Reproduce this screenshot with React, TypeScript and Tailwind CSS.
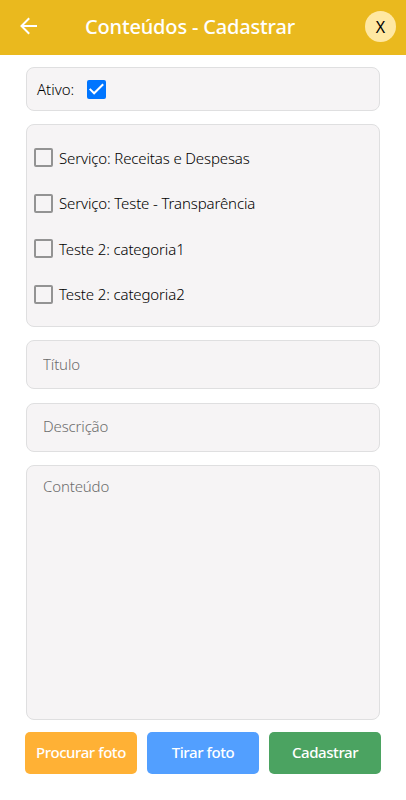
import React, { useState } from 'react';

interface Category {
    id: number;
    label: string;
}

const CATEGORIES: Category[] = [
    { id: 1, label: 'Serviço: Receitas e Despesas' },
    { id: 2, label: 'Serviço: Teste - Transparência' },
    { id: 3, label: 'Teste 2: categoria1' },
    { id: 4, label: 'Teste 2: categoria2' },
];

const fieldClass =
    'block w-full resize-none rounded-lg border border-[#dfdfe0] bg-[#f6f4f5] px-4 text-[15px] tracking-[-0.15px] font-light text-black placeholder:text-[#6c6c6c] placeholder:opacity-100 focus:outline-none';

interface CheckboxProps {
    checked: boolean;
    onChange: () => void;
    label: string;
}

const Checkbox: React.FC<CheckboxProps> = ({ checked, onChange, label }) => (
    <button
        type="button"
        role="checkbox"
        aria-checked={checked}
        aria-label={label}
        onClick={onChange}
        className={`flex h-[19px] w-[19px] shrink-0 items-center justify-center rounded-[2px] ${checked ? 'bg-[#0075ff]' : 'border-2 border-[#939393]'}`}
    >
        {checked && (
            <svg viewBox="0 0 19 19" className="h-[19px] w-[19px]" fill="none" stroke="white" strokeWidth="2">
                <path d="M2.7 8.9 L7.1 13.3 L16.2 4.2" />
            </svg>
        )}
    </button>
);

const App: React.FC = () => {
    const [active, setActive] = useState<boolean>(true);
    const [selected, setSelected] = useState<number[]>([]);

    const toggleCategory = (id: number) => {
        setSelected(prev => (prev.includes(id) ? prev.filter(item => item !== id) : [...prev, id]));
    };

    return (
        <div className="flex h-screen flex-col bg-white font-['Noto_Sans',sans-serif] text-black">
            <header className="flex h-[55px] shrink-0 items-center bg-[#eab91e] pr-[10px] pl-5">
                <button type="button" aria-label="Voltar" className="-mt-[3px] w-[65px]">
                    <svg viewBox="0 0 18 18" className="h-[18px] w-[18px]" fill="none" stroke="white" strokeWidth="2">
                        <path d="M17 9 H2 M9.2 1.3 L1.5 9 L9.2 16.7" />
                    </svg>
                </button>
                <h1 className="-mt-px flex-1 text-[20px] font-medium tracking-[-0.17px] whitespace-nowrap text-white">Conteúdos - Cadastrar</h1>
                <button
                    type="button"
                    aria-label="Fechar"
                    className="-mt-[2px] flex h-[31px] w-[31px] items-center justify-center rounded-full bg-[#ffe8a3] text-[16px]"
                >
                    X
                </button>
            </header>

            <main className="flex flex-col px-[26px] pt-3">
                <div className="flex h-[44px] items-center rounded-lg border border-[#dfdfe0] bg-[#f6f4f5] px-[10px]">
                    <span className="w-[50px] text-[15px] font-light">Ativo:</span>
                    <Checkbox checked={active} onChange={() => setActive(!active)} label="Ativo" />
                </div>

                <div className="mt-[13px] flex h-[203px] flex-col justify-center rounded-lg border border-[#dfdfe0] bg-[#f6f4f5] pt-px pl-[7px]">
                    {CATEGORIES.map(category => (
                        <div key={category.id} className="flex h-[45.5px] items-center gap-[6px]">
                            <Checkbox
                                checked={selected.includes(category.id)}
                                onChange={() => toggleCategory(category.id)}
                                label={category.label}
                            />
                            <span className="text-[15px] font-light tracking-[-0.13px]">{category.label}</span>
                        </div>
                    ))}
                </div>

                <input type="text" placeholder="Título" className={`mt-[13px] h-[49px] pb-[2px] ${fieldClass}`} />
                <input type="text" placeholder="Descrição" className={`mt-[14px] h-[49px] pb-[3px] ${fieldClass}`} />
                <textarea placeholder="Conteúdo" className={`mt-[13px] h-[255px] pt-[9px] ${fieldClass}`} />

                <div className="-mx-px mt-3 grid h-[42px] grid-cols-3 gap-[10px] text-[15px] font-medium tracking-[-0.43px] text-white">
                    <button type="button" className="rounded-[5px] bg-[#ffb135] pb-px">Procurar foto</button>
                    <button type="button" className="rounded-[5px] bg-[#529fff] pb-px">Tirar foto</button>
                    <button type="button" className="rounded-[5px] bg-[#4ba361] pb-px">Cadastrar</button>
                </div>
            </main>
        </div>
    );
};

export default App;
